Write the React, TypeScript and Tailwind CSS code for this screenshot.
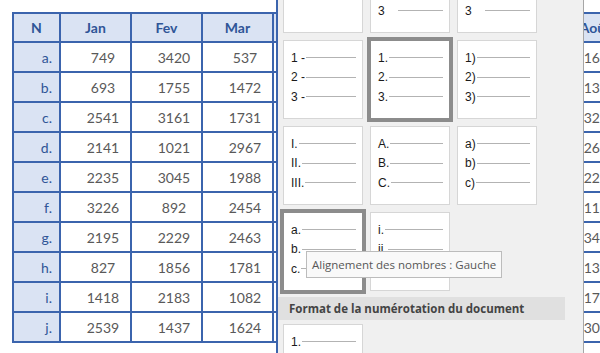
import React from "react";

const BLUE = "border-[#3b64ad]";

const MONTHS = ["Jan", "Fev", "Mar", "Avr", "Mai", "Jun", "Jul", "Aoû"];

const ROWS: [string, number[]][] = [
  ["a.", [749, 3420, 537, 1210, 2044, 1893, 2671, 1698]],
  ["b.", [693, 1755, 1472, 3012, 1187, 2450, 906, 1375]],
  ["c.", [2541, 3161, 1731, 1544, 2876, 1322, 3105, 3214]],
  ["d.", [2141, 1021, 2967, 2208, 1765, 2990, 1431, 2631]],
  ["e.", [2235, 3045, 1988, 987, 3320, 2117, 2248, 2207]],
  ["f.", [3226, 892, 2454, 1876, 2503, 1644, 1980, 1150]],
  ["g.", [2195, 2229, 2463, 3091, 1402, 2785, 1127, 3405]],
  ["h.", [827, 1856, 1781, 2360, 2911, 1058, 2644, 1321]],
  ["i.", [1418, 2183, 1082, 1733, 2290, 3174, 1806, 1713]],
  ["j.", [2539, 1437, 1624, 2815, 1093, 2427, 3310, 3021]],
];

type TileDef = { items: string[]; tab?: boolean; selected?: boolean };

const TILE_ROWS: TileDef[][] = [
  [{ items: [] }, { items: ["1", "2", "3"], tab: true }, { items: ["1", "2", "3"], tab: true }],
  [{ items: ["1 -", "2 -", "3 -"] }, { items: ["1.", "2.", "3."], selected: true }, { items: ["1)", "2)", "3)"] }],
  [{ items: ["I.", "II.", "III."] }, { items: ["A.", "B.", "C."] }, { items: ["a)", "b)", "c)"] }],
  [{ items: ["a.", "b.", "c."], selected: true }, { items: ["i.", "ii.", "iii."] }],
];

function Tile({ items, tab, selected }: TileDef) {
  return (
    <div
      className={`h-[79px] bg-white border pl-[7px] pr-[6px] pt-[7px] ${
        selected ? "border-[#8c8c8c] ring-[3px] ring-[#8c8c8c]" : "border-[#d6d6d6]"
      }`}
    >
      {items.map((t) => (
        <div key={t} className="flex items-center h-[19.5px]">
          <span className="text-[12px] text-[#1a1a1a] leading-none">{t}</span>
          <span className={`h-px flex-1 bg-[#b3b3b3] ${tab ? "ml-[13px]" : "ml-px"}`} />
        </div>
      ))}
    </div>
  );
}

export default function App() {
  return (
    <div className="relative w-[600px] h-[353px] overflow-hidden bg-white font-['Lato',sans-serif]">
      {/* spreadsheet */}
      <div className="pt-[12px] pl-[12px]">
        <div className={`grid grid-cols-[47px_repeat(8,71px)] w-max border-l-2 border-t-2 ${BLUE} text-[14px]`}>
          <div className={`h-[29px] flex items-center justify-center bg-[#dae3f3] border-r-2 border-b-2 ${BLUE} font-bold text-[#2f5597]`}>
            N
          </div>
          {MONTHS.map((m) => (
            <div
              key={m}
              className={`h-[29px] flex items-center justify-center bg-[#dae3f3] border-r-2 border-b-2 ${BLUE} font-bold text-[#2f5597]`}
            >
              {m}
            </div>
          ))}
          {ROWS.map(([label, vals]) => (
            <React.Fragment key={label}>
              <div className={`h-[30px] flex items-center justify-end pr-[7px] bg-[#dae3f3] border-r-2 border-b-2 ${BLUE} text-[#2f5597]`}>
                {label}
              </div>
              {vals.map((v, i) => (
                <div
                  key={i}
                  className={`h-[30px] flex items-center justify-center pl-[15px] bg-white border-r-2 border-b-2 ${BLUE} text-[#595959]`}
                >
                  {v}
                </div>
              ))}
            </React.Fragment>
          ))}
        </div>
      </div>

      {/* numbering gallery dropdown */}
      <div className="absolute left-[276px] top-0 w-[308px] h-[353px] overflow-hidden bg-[#f0f0f0] border-l-2 border-[#3b64ad] border-r border-r-[#a6a6a6] font-['Liberation_Sans',Arial,sans-serif]">
        <div className="-mt-[46px] w-[287px]">
          <div className="flex flex-col gap-[7px] pl-[5px]">
            {TILE_ROWS.map((row, r) => (
              <div key={r} className="grid grid-cols-[80px_80px_80px] gap-[7px]">
                {row.map((t, c) => (
                  <Tile key={c} {...t} />
                ))}
              </div>
            ))}
          </div>
          <div className="mt-[6px] h-[23px] flex items-center pl-[11px] bg-[#e0e0e0] font-['Open_Sans',sans-serif] font-bold text-[11.5px] text-[#444444]">
            Format de la numérotation du document
          </div>
          <div className="mt-[4px] pl-[5px]">
            <div className="w-[80px]">
              <Tile items={["1.", "2.", "3."]} />
            </div>
          </div>
        </div>
      </div>

      {/* tooltip */}
      <div className="absolute left-[306px] top-[251px] h-[27px] px-[5px] flex items-center bg-[#f9f9f9] border border-[#bcbcbc] font-['Open_Sans',sans-serif] text-[11.5px] text-[#575757] whitespace-nowrap">
        Alignement des nombres : Gauche
      </div>
    </div>
  );
}
